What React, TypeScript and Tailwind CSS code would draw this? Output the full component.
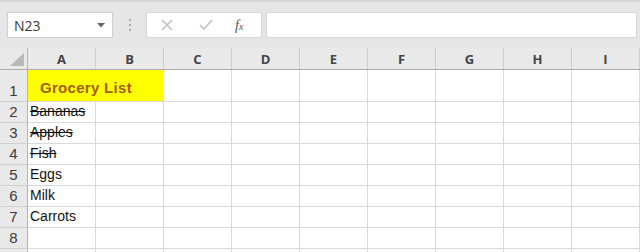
import React from "react";

const cols = ["A", "B", "C", "D", "E", "F", "G", "H", "I"];

type Row = { n: number | null; h: string; a?: React.ReactNode };

const rows: Row[] = [
  { n: 2, h: "h-[21px]", a: <span className="line-through">Bananas</span> },
  { n: 3, h: "h-[21px]", a: <span className="line-through">Apples</span> },
  { n: 4, h: "h-[21px]", a: <span className="line-through">Fish</span> },
  { n: 5, h: "h-[21px]", a: "Eggs" },
  { n: 6, h: "h-[21px]", a: "Milk" },
  { n: 7, h: "h-[21px]", a: "Carrots" },
  { n: 8, h: "h-[21px]" },
  { n: null, h: "h-[21px]" },
];

function RowHead({ n, h }: { n: number | null; h: string }) {
  return (
    <div
      className={`${h} w-[28px] shrink-0 bg-[#e9e9e9] border-r border-r-[#b5b5b5] border-b border-b-[#d0d0d0] flex items-end justify-center pb-[3px] text-[15px] leading-[15px] text-[#3b3b3b]`}
    >
      {n}
    </div>
  );
}

export default function App() {
  return (
    <div
      className="w-[640px] h-[252px] overflow-hidden bg-[#e6e6e6] flex flex-col"
      style={{ fontFamily: '"Liberation Sans", Arial, sans-serif' }}
    >
      {/* toolbar */}
      <div className="h-[48px] shrink-0 flex flex-col border-t-2 border-t-[#d6d6d6]">
        <div className="flex items-stretch h-[26px] mt-[10px] pr-[3px]">
          <div className="ml-[7px] w-[106px] bg-white border border-[#cfcfcf] flex items-center justify-between pl-[6px] pr-[7px]">
            <span className="text-[14px] text-[#3a3a3a]" style={{ fontFamily: '"Open Sans", sans-serif' }}>N23</span>
            <svg width="8" height="5" viewBox="0 0 8 5">
              <path d="M0 0 L8 0 L4 4.5 Z" fill="#666" />
            </svg>
          </div>
          <div className="w-[33px] flex flex-col items-center justify-center gap-[3px]">
            <span className="w-[2px] h-[2px] bg-[#a8a8a8]" />
            <span className="w-[2px] h-[2px] bg-[#a8a8a8]" />
            <span className="w-[2px] h-[2px] bg-[#a8a8a8]" />
          </div>
          <div className="w-[116px] bg-white border border-[#d6d6d6] flex items-center">
            <svg className="ml-[14px]" width="12" height="12" viewBox="0 0 12 12">
              <path d="M1 1 L11 11 M11 1 L1 11" stroke="#c2c2c2" strokeWidth="1.6" />
            </svg>
            <svg className="ml-[26px]" width="14" height="12" viewBox="0 0 14 12">
              <path d="M1 6 L5 10 L13 1" stroke="#c2c2c2" strokeWidth="1.7" fill="none" />
            </svg>
            <span
              className="ml-[22px] text-[14px] text-[#555] italic"
              style={{ fontFamily: '"Liberation Serif", serif' }}
            >
              f<span className="text-[10px]">x</span>
            </span>
          </div>
          <div className="ml-[4px] flex-1 bg-white border border-[#d6d6d6]" />
        </div>
      </div>

      {/* column header */}
      <div className="flex h-[22px] shrink-0 border-b border-b-[#ababab] bg-[#e9e9e9]">
        <div className="w-[28px] shrink-0 border-r border-r-[#b5b5b5] relative">
          <svg className="absolute right-[3px] bottom-[3px]" width="14" height="13" viewBox="0 0 14 13">
            <path d="M14 0 L14 13 L0 13 Z" fill="#b9b9b9" />
          </svg>
        </div>
        {cols.map((c) => (
          <div
            key={c}
            className="w-[68px] shrink-0 border-r border-r-[#cfcfcf] flex items-center justify-center pt-[2px] text-[13px] font-bold text-[#444]"
            style={{ fontFamily: '"Open Sans", sans-serif' }}
          >
            {c}
          </div>
        ))}
      </div>

      {/* row 1 */}
      <div className="flex shrink-0">
        <RowHead n={1} h="h-[32px]" />
        <div className="h-[32px] w-[136px] shrink-0 bg-[#ffff00] border-b border-b-[#d9d9d9] flex items-end pl-[12px] pb-[5px]">
          <span className="text-[15px] leading-[16px] font-bold text-[#a35d00] tracking-[0.3px]">Grocery List</span>
        </div>
        {cols.slice(2).map((c) => (
          <div key={c} className="h-[32px] w-[68px] shrink-0 bg-white border-r border-b border-[#d9d9d9]" />
        ))}
      </div>

      {rows.map((r, idx) => (
        <div key={idx} className="flex shrink-0">
          <RowHead n={r.n} h={r.h} />
          {cols.map((c, i) => (
            <div
              key={c}
              className={`${r.h} w-[68px] shrink-0 bg-white border-r border-b border-[#d9d9d9] flex items-end pl-[2px] pb-[3px] text-[14px] leading-[15px] text-[#111] whitespace-nowrap`}
            >
              {i === 0 ? r.a : null}
            </div>
          ))}
        </div>
      ))}
    </div>
  );
}
